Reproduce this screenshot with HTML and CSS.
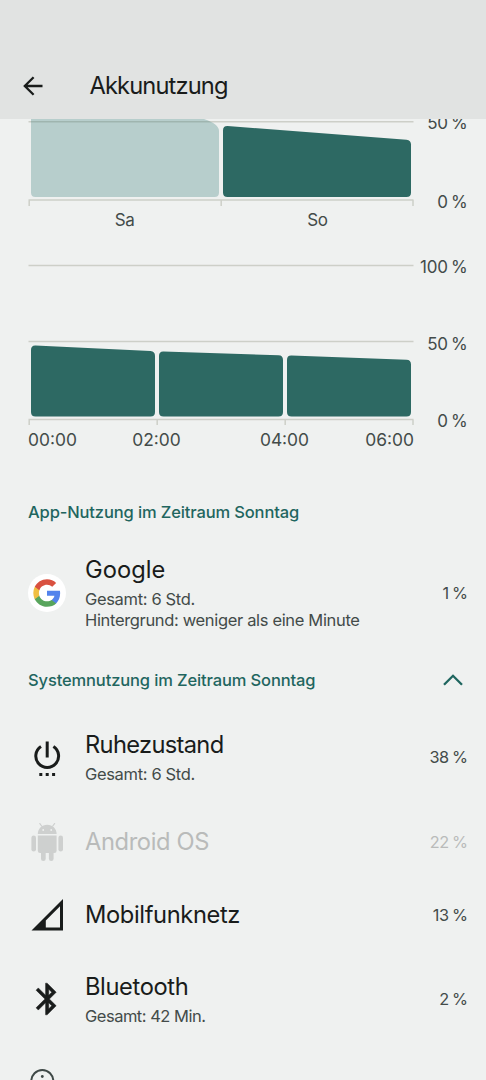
FILE: index.html
```html
<!DOCTYPE html>
<html lang="de">
<head>
<meta charset="utf-8">
<title>Akkunutzung</title>
<link rel="stylesheet" href="styles.css">
</head>
<body>
<header class="topbar">
  <svg class="back" width="24" height="24" viewBox="0 0 24 24"><path d="M21.500 12H4M12.600 3.300L3.800 12l8.800 8.700" fill="none" stroke="#191c1b" stroke-width="2.300"/></svg>
  <h1 class="title">Akkunutzung</h1>
</header>
<main>
  <section class="chart daily">
    <div class="plot">
      <svg width="386" height="90" viewBox="28 117 386 90">
        <path class="grid" d="M28.500 121.800H413.500M28.500 200H413.500M29.200 200v6M221.200 200v6M413 200v6"/>
        <path class="bar faded" d="M31 110H180L204 119Q219 124 219 131V192.500Q219 197 214.500 197H35.500Q31 197 31 192.500Z"/>
        <path class="bar" d="M223 130.500Q223 126 227.500 126.100L406.500 139.700Q411 140.200 411 144.500V192.500Q411 197 406.500 197H227.500Q223 197 223 192.500Z"/>
      </svg>
      <div class="days"><span>Sa</span><span>So</span></div>
    </div>
    <div class="scale"><span>50 %</span><span>0 %</span></div>
  </section>
  <section class="chart hourly">
    <div class="plot">
      <svg width="386" height="168" viewBox="28 258 386 168">
        <path class="grid" d="M28.500 265.600H413.500M28.500 341.500H413.500M28.500 419.500H413.500M29.200 419.500v5.500M157.200 419.500v5.500M285.200 419.500v5.500M413 419.500v5.500"/>
        <path class="bar" d="M31 350Q31 345.300 35.500 345.500L150.500 351.100Q155 351.400 155 356V412Q155 416.500 150.500 416.500H35.500Q31 416.500 31 412Z"/>
        <path class="bar" d="M159 356Q159 351.300 163.500 351.500L278.500 355.200Q283 355.400 283 360V412Q283 416.500 278.500 416.500H163.500Q159 416.500 159 412Z"/>
        <path class="bar" d="M287 360Q287 355.400 291.500 355.600L406.500 359.700Q411 359.900 411 364.500V412Q411 416.500 406.500 416.500H291.500Q287 416.500 287 412Z"/>
      </svg>
      <div class="hours"><span>00:00</span><span>02:00</span><span>04:00</span><span>06:00</span></div>
    </div>
    <div class="scale"><span>100 %</span><span>50 %</span><span>0 %</span></div>
  </section>

  <h2 class="heading apps"><span>App-Nutzung im Zeitraum Sonntag</span></h2>
  <div class="row google">
    <div class="icon"><svg width="38" height="38" viewBox="-6 -6 36 36"><circle cx="12" cy="12" r="18" fill="#fff"/><g transform="translate(-1 -1) scale(1.083)"><path fill="#5383ec" d="M23.500 12.300c0-.8-.1-1.600-.2-2.300H12v4.500h6.500c-.3 1.500-1.100 2.700-2.400 3.600v3h3.900c2.200-2.100 3.500-5.100 3.500-8.800z"/><path fill="#58a55c" d="M12 24c3.200 0 6-1.100 8-2.900l-3.900-3c-1.100.7-2.500 1.200-4.100 1.200-3.100 0-5.800-2.100-6.700-5H1.300v3.100C3.300 21.300 7.300 24 12 24z"/><path fill="#f1bf42" d="M5.300 14.300c-.5-1.500-.5-3.100 0-4.600V6.600h-4c-1.700 3.400-1.700 7.400 0 10.800z"/><path fill="#d95140" d="M12 4.800c1.800 0 3.300.6 4.600 1.800L20 3.200C17.900 1.200 15.200 0 12 0 7.300 0 3.300 2.700 1.300 6.600l4 3.100c.9-2.900 3.600-4.900 6.700-4.900z"/></g></svg></div>
    <div class="text"><div class="name loose">Google</div><div class="sub">Gesamt: 6 Std.</div><div class="sub">Hintergrund: weniger als eine Minute</div></div>
    <div class="value">1 %</div>
  </div>

  <h2 class="heading system"><span>Systemnutzung im Zeitraum Sonntag</span>
    <svg width="28" height="24" viewBox="0 0 28 24"><path d="M5 16.800L14 7.800l9 9" fill="none" stroke="#1f665f" stroke-width="2.300"/></svg>
  </h2>
  <div class="row tall">
    <div class="icon"><svg width="38" height="38" viewBox="28 738 38 38"><path d="M47.200 741.500v16M41 746.500A11.400 11.400 0 1 0 53.400 746.500" fill="none" stroke="#191c1b" stroke-width="3"/><path d="M39.300 773h3v3h-3zM45.700 773h3v3h-3zM52.100 773h3v3h-3z" fill="#191c1b"/></svg></div>
    <div class="text"><div class="name tight">Ruhezustand</div><div class="sub">Gesamt: 6 Std.</div></div>
    <div class="value">38 %</div>
  </div>
  <div class="row disabled">
    <div class="icon"><svg width="38" height="38" viewBox="28 823 38 38" fill="#ced0cf"><path d="M37.800 834c0-5.600 4.200-9.300 9.400-9.300s9.400 3.700 9.400 9.300z"/><path d="M42 826.500l-2.500-3.300M52.400 826.500l2.500-3.300" stroke="#ced0cf" stroke-width="1.200"/><path d="M37.800 835.500h18.800v15.200q0 2.300-2.300 2.300H40.100q-2.300 0-2.300-2.300z"/><rect x="31.400" y="835.500" width="4.600" height="16" rx="2.300"/><rect x="58.400" y="835.500" width="4.600" height="16" rx="2.300"/><rect x="41" y="848" width="4.700" height="13" rx="2.300"/><rect x="48.900" y="848" width="4.700" height="13" rx="2.300"/><circle cx="43.200" cy="830" r=".9" fill="#eff1f0"/><circle cx="51.200" cy="830" r=".9" fill="#eff1f0"/></svg></div>
    <div class="text"><div class="name">Android OS</div></div>
    <div class="value">22 %</div>
  </div>
  <div class="row">
    <div class="icon"><svg width="38" height="38" viewBox="28 896 38 38"><path d="M31.500 930.500L63 899v31.500zM45.800 920.500v7H60V906.300z" fill="#191c1b" fill-rule="evenodd"/></svg></div>
    <div class="text"><div class="name">Mobilfunknetz</div></div>
    <div class="value">13 %</div>
  </div>
  <div class="row tall">
    <div class="icon"><svg width="38" height="38" viewBox="-.1 0 24 24"><path fill="#191c1b" stroke="#191c1b" stroke-width=".3" d="M17.710 7.710 12 2h-1v7.590L6.410 5 5 6.410 10.590 12 5 17.590 6.410 19 11 14.410V22h1l5.710-5.710L13.410 12l4.300-4.290zM13 5.830l1.880 1.880L13 9.590V5.830zm1.880 10.460L13 18.170v-3.760l1.880 1.880z"/></svg></div>
    <div class="text"><div class="name">Bluetooth</div><div class="sub minutes">Gesamt: 42 Min.</div></div>
    <div class="value">2 %</div>
  </div>
  <div class="row next"><svg width="28" height="28" viewBox="0 0 28 28"><circle cx="14.300" cy="15" r="11" fill="none" stroke="#3f4947" stroke-width="2"/><circle cx="14.300" cy="10.500" r="1.400" fill="#3f4947"/></svg></div>
</main>
</body>
</html>
```
FILE: styles.css
```css
* { box-sizing: border-box; }
body { margin: 0; height: 1080px; overflow: hidden; background: #eff1f0; color: #191c1b; font-family: Inter, Roboto, sans-serif; }
.topbar { position: relative; z-index: 1; display: flex; align-items: center; height: 119px; padding: 53px 0 0 21px; background: #e1e3e2; }
.back { margin-right: 44.500px; }
.title { margin: 0; font-size: 23.700px; font-weight: 370; line-height: 30px; letter-spacing: -.88px; }
.chart { display: flex; justify-content: space-between; padding: 0 18.500px 0 28px; color: #434b49; font-size: 17px; line-height: 20px; }
.plot { width: 386px; }
.plot svg { display: block; }
.grid { fill: none; stroke: #cdcfc8; stroke-width: 1.500; }
.bar { fill: #2d6963; }
.faded { fill: #2d7673; opacity: .285; }
.scale { display: flex; flex-direction: column; justify-content: space-between; align-items: flex-end; font-size: 17px; letter-spacing: -.25px; word-spacing: -1.200px; white-space: nowrap; }
.daily { margin-top: -2px; height: 141px; }
.daily .scale { margin-top: -4px; height: 99px; }
.hourly { height: 230px; }
.hourly .scale { margin-top: -1px; height: 174px; }
.days { display: grid; grid-template-columns: 1fr 1fr; text-align: center; padding-top: 3px; letter-spacing: -.4px; }
.hours { display: grid; grid-template-columns: 64px 129px 127px 66px; padding-top: 4px; font-size: 17.400px; text-align: center; }
.hours span:first-child { text-align: left; }
.hours span:last-child { text-align: right; }
.heading { margin: 0; padding: 0 19px 0 28px; display: flex; align-items: center; justify-content: space-between; color: #1f665f; font-size: 16.500px; font-weight: 500; letter-spacing: -.13px; white-space: nowrap; }
.apps { height: 47px; }
.system { height: 58px; }
.row { display: flex; align-items: center; height: 72.500px; padding: 0 18.500px 0 28px; }
.google { height: 116px; }
.tall { height: 96px; }
.tall + .disabled { margin-top: 1px; }
.icon { width: 57px; height: 38px; }
.icon svg { display: block; }
.text { flex: 1; white-space: nowrap; }
.google .text, .tall .text { padding-bottom: 2px; }
.google .text { padding-bottom: 3px; }
.name { font-size: 23.700px; font-weight: 370; line-height: 36px; letter-spacing: -.38px; }
.name.tight { letter-spacing: -.68px; }
.name.loose { letter-spacing: .05px; }
.google .name, .tall .name { margin-bottom: 1px; }
.sub { font-size: 16.500px; line-height: 21px; letter-spacing: -.34px; color: #434b49; }
.minutes { letter-spacing: -.5px; }
.value { font-size: 16.300px; letter-spacing: -.4px; word-spacing: -1px; color: #434b49; }
.disabled .name, .disabled .value { color: #b9bbba; }
.next { align-items: flex-start; padding-top: 19px; }
```
